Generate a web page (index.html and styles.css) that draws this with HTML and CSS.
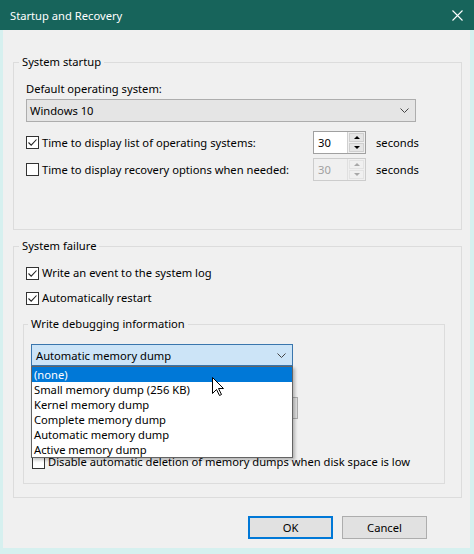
FILE: index.html
```html
<!DOCTYPE html>
<html>
<head>
<meta charset="utf-8">
<title>Startup and Recovery</title>
<link rel="stylesheet" href="styles.css">
</head>
<body>
<div class="window">
  <div class="titlebar">
    <span class="title">Startup and Recovery</span>
    <svg class="close" width="11" height="11" viewBox="0 0 11 11"><path d="M0.5 0.5 L10.5 10.5 M10.5 0.5 L0.5 10.5" stroke="#fff" stroke-width="1.1" fill="none"/></svg>
  </div>
  <div class="content">
    <fieldset class="group g-startup">
      <legend>System startup</legend>
      <div class="label">Default operating system:</div>
      <div class="combo combo-os">
        <span>Windows 10</span>
        <svg class="chev" width="9" height="5" viewBox="0 0 9 5"><path d="M0.5 0.5 L4.5 4.5 L8.5 0.5" stroke="#444" fill="none"/></svg>
      </div>
      <div class="time-row">
        <div class="check">
          <span class="box"><svg width="11" height="11" viewBox="0 0 11 11"><path d="M1.5 5.5 L4.2 8.2 L9.5 2.5" stroke="#222" stroke-width="1.1" fill="none"/></svg></span>
          <span>Time to display list of operating systems:</span>
        </div>
        <div class="spin">
          <span class="spin-val">30</span>
          <span class="spin-btns"><span class="sb up"></span><span class="sb down"></span></span>
        </div>
        <span class="unit">seconds</span>
      </div>
      <div class="time-row second">
        <div class="check">
          <span class="box"></span>
          <span>Time to display recovery options when needed:</span>
        </div>
        <div class="spin disabled">
          <span class="spin-val">30</span>
          <span class="spin-btns"><span class="sb up"></span><span class="sb down"></span></span>
        </div>
        <span class="unit">seconds</span>
      </div>
    </fieldset>

    <fieldset class="group g-failure">
      <legend>System failure</legend>
      <div class="check row">
        <span class="box"><svg width="11" height="11" viewBox="0 0 11 11"><path d="M1.5 5.5 L4.2 8.2 L9.5 2.5" stroke="#222" stroke-width="1.1" fill="none"/></svg></span>
        <span>Write an event to the system log</span>
      </div>
      <div class="check row row2">
        <span class="box"><svg width="11" height="11" viewBox="0 0 11 11"><path d="M1.5 5.5 L4.2 8.2 L9.5 2.5" stroke="#222" stroke-width="1.1" fill="none"/></svg></span>
        <span>Automatically restart</span>
      </div>
      <fieldset class="group g-debug">
        <legend>Write debugging information</legend>
        <div class="combo-wrap">
          <div class="combo combo-open">
            <span>Automatic memory dump</span>
            <svg class="chev" width="9" height="5" viewBox="0 0 9 5"><path d="M0.5 0.5 L4.5 4.5 L8.5 0.5" stroke="#444" fill="none"/></svg>
          </div>
          <ul class="dropdown-list">
            <li class="selected">(none)</li>
            <li>Small memory dump (256 KB)</li>
            <li>Kernel memory dump</li>
            <li>Complete memory dump</li>
            <li>Automatic memory dump</li>
            <li>Active memory dump</li>
          </ul>
        </div>
        <div class="dumpfile"></div>
        <div class="check disable-row">
          <span class="box"></span>
          <span>Disable automatic deletion of memory dumps when disk space is low</span>
        </div>
      </fieldset>
    </fieldset>

    <div class="buttons">
      <button class="btn btn-default">OK</button>
      <button class="btn">Cancel</button>
    </div>
  </div>
  <svg class="cursor" width="13" height="20" viewBox="0 0 13 20"><path d="M0.5 0.5 L0.5 16.5 L4.5 12.5 L7.5 18.5 L9.5 17.5 L6.5 11.5 L11.5 11.5 Z" fill="#fff" stroke="#000" stroke-width="1"/></svg>
</div>
</body>
</html>
```

FILE: styles.css
```css
* { box-sizing: border-box; }

html, body {
  margin: 0;
  padding: 0;
}

body {
  width: 474px;
  height: 554px;
  overflow: hidden;
  font-family: "Noto Sans", "Segoe UI", sans-serif;
  font-size: 11.2px;
  color: #000;
  background: #d6f0ef;
}

.window {
  position: relative;
  width: 474px;
  height: 554px;
  display: flex;
  flex-direction: column;
  background: #d6f0ef;
}

.titlebar {
  flex: none;
  height: 30px;
  background: #17645b;
  color: #fff;
  display: flex;
  align-items: center;
  justify-content: space-between;
  padding: 0 11px 0 10px;
}

.title {
  font-size: 11.2px;
}

.content {
  flex: 1;
  background: #f0f0f0;
  margin: 0 4px 6px 3px;
  padding: 23px 8px 0 10px;
}

.group {
  margin: 0;
  min-width: 0;
  border: 1px solid #dcdcdc;
}

legend {
  padding: 0 3px;
  line-height: 18px;
}

.g-startup {
  padding: 9px 13px 48px 12px;
}
.g-startup > legend { margin-left: -7px; }

.label {
  line-height: 18px;
}

.combo {
  display: flex;
  align-items: center;
  justify-content: space-between;
  height: 23px;
  border: 1px solid #adadad;
  background: #e5e5e5;
  padding: 0 6px 0 3px;
}

.combo-os {
  width: 390px;
  margin-top: 1px;
}

.time-row {
  display: grid;
  grid-template-columns: 287px 53px auto;
  align-items: center;
  height: 23px;
  margin-top: 9px;
}
.time-row.second { margin-top: 4px; }

.unit { padding-left: 10px; }

.check {
  display: flex;
  align-items: center;
  gap: 3px;
  line-height: 18px;
}

.box {
  flex: none;
  width: 13px;
  height: 13px;
  border: 1px solid #333;
  background: #fff;
  display: flex;
}

.spin {
  display: flex;
  height: 23px;
  border: 1px solid #a0a0a0;
  background: #fff;
}
.spin-val {
  flex: 1;
  padding-left: 4px;
  line-height: 21px;
}
.spin-btns {
  width: 18px;
  display: flex;
  flex-direction: column;
  gap: 1px;
  padding: 1px;
  background: #f0f0f0;
  border-left: 1px solid #d0d0d0;
}
.sb {
  flex: 1;
  display: flex;
  align-items: center;
  justify-content: center;
  background: #e5e5e5;
  border: 1px solid #cfcfcf;
}
.sb::before {
  content: "";
  width: 0;
  height: 0;
  border-left: 3px solid transparent;
  border-right: 3px solid transparent;
}
.sb.up::before { border-bottom: 3px solid #000; }
.sb.down::before { border-top: 3px solid #000; }

.spin.disabled {
  border-color: #cccccc;
  background: #f0f0f0;
  color: #a0a0a0;
}
.spin.disabled .spin-btns { border-left-color: #e0e0e0; }
.spin.disabled .sb { background: #f0f0f0; border-color: #e3e3e3; }
.spin.disabled .sb.up::before { border-bottom-color: #a8a8a8; }
.spin.disabled .sb.down::before { border-top-color: #a8a8a8; }

.g-failure {
  margin-top: 7px;
  padding: 9px 16px 13px 9px;
}
.g-failure > legend { margin-left: -4px; }

.row { padding-left: 3px; }
.row2 { margin-top: 7px; }

.g-debug {
  margin-top: 8px;
  padding: 11px 8px 12px 7px;
}
.g-debug > legend { margin-left: -3px; }

.combo-wrap {
  position: relative;
  width: 262px;
}

.combo-open {
  height: 22px;
  background: #cce4f7;
  border-color: #3a76ad;
  padding-left: 4px;
}

.dropdown-list {
  position: absolute;
  left: 0;
  top: 100%;
  z-index: 2;
  width: 262px;
  margin: 0;
  padding: 0;
  list-style: none;
  background: #fff;
  border: 1px solid #646464;
  box-shadow: 2px 2px 3px rgba(0, 0, 0, 0.25);
}
.dropdown-list li {
  height: 15px;
  line-height: 15px;
  padding-left: 2px;
}
.dropdown-list li.selected {
  background: #0078d7;
  color: #fff;
}

.dumpfile {
  width: 267px;
  height: 22px;
  margin-top: 31px;
  border: 1px solid #adadad;
  background: #e1e1e1;
}

.disable-row {
  margin-top: 34px;
  padding-left: 1px;
}

.buttons {
  display: flex;
  justify-content: flex-end;
  gap: 9px;
  margin-top: 18px;
  padding-right: 35px;
}

.btn {
  width: 85px;
  height: 23px;
  padding: 0;
  border: 1px solid #adadad;
  background: #e1e1e1;
  font-family: inherit;
  font-size: 11.2px;
  color: #000;
}
.btn-default {
  border: 2px solid #0078d7;
}

.cursor {
  position: absolute;
  left: 212px;
  top: 377px;
  z-index: 5;
}
```
